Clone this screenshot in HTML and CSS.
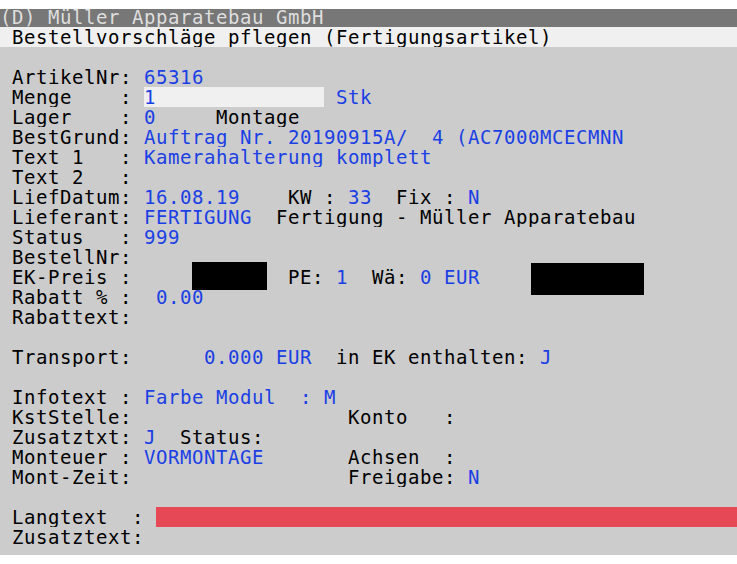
FILE: index.html
```html
<!DOCTYPE html>
<html lang="de">
<head>
    <meta charset="UTF-8">
    <meta name="viewport" content="width=device-width, initial-scale=1.0">
    <title>Bestellvorschläge pflegen</title>
    <link rel="stylesheet" href="styles.css">
</head>
<body>

<div class="screen">
    <div class="row title">(D) Müller Apparatebau GmbH</div>
    <div class="row subtitle"> Bestellvorschläge pflegen (Fertigungsartikel)</div>

    <div class="body">
        <div class="row"> </div>
        <div class="row"> ArtikelNr: <span class="val">65316</span></div>
        <div class="row"> Menge    : <span class="input val">1              </span> <span class="val">Stk</span></div>
        <div class="row"> Lager    : <span class="val">0</span>     Montage</div>
        <div class="row"> BestGrund: <span class="val">Auftrag Nr. 20190915A/  4 (AC7000MCECMNN</span></div>
        <div class="row"> Text 1   : <span class="val">Kamerahalterung komplett</span></div>
        <div class="row"> Text 2   :</div>
        <div class="row"> LiefDatum: <span class="val">16.08.19</span>    KW : <span class="val">33</span>  Fix : <span class="val">N</span></div>
        <div class="row"> Lieferant: <span class="val">FERTIGUNG</span>  Fertigung - Müller Apparatebau</div>
        <div class="row"> Status   : <span class="val">999</span></div>
        <div class="row"> BestellNr:</div>
        <div class="row"> EK-Preis :             PE: <span class="val">1</span>  Wä: <span class="val">0 EUR</span></div>
        <div class="row"> Rabatt % :  <span class="val">0.00</span></div>
        <div class="row"> Rabattext:</div>
        <div class="row"> </div>
        <div class="row"> Transport:      <span class="val">0.000 EUR</span>  in EK enthalten: <span class="val">J</span></div>
        <div class="row"> </div>
        <div class="row"> Infotext : <span class="val">Farbe Modul  : M</span></div>
        <div class="row"> KstStelle:                  Konto   :</div>
        <div class="row"> Zusatztxt: <span class="val">J</span>  Status:</div>
        <div class="row"> Monteuer : <span class="val">VORMONTAGE</span>       Achsen  :</div>
        <div class="row"> Mont-Zeit:                  Freigabe: <span class="val">N</span></div>
        <div class="row"> </div>
        <div class="row field-row"><span> Langtext  : </span><span class="bar"></span></div>
        <div class="row"> Zusatztext:</div>
    </div>

    <!-- geschwärzte Preise -->
    <div class="redact redact-ek"></div>
    <div class="redact redact-vk"></div>
</div>

</body>
</html>
```

FILE: styles.css
```css
body {
    margin: 0;
    background-color: #ffffff;
}
.screen {
    position: relative;
    margin-top: 9px;
    font-family: "DejaVu Sans Mono", "Liberation Mono", monospace;
    font-size: 19px;
    letter-spacing: 0.56px;
    color: #000;
}
.row {
    height: 20px;
    line-height: 20px;
    white-space: pre;
    overflow: hidden;
}
.title {
    height: 18px;
    line-height: 17px;
    overflow: visible;
    background-color: #777777;
    color: #dedede;
}
.subtitle {
    background-color: #f0f0f0;
}
.body {
    background-color: #cccccc;
    padding-bottom: 8px;
}
.val {
    color: #1a40e4;
}
.input {
    background-color: #f0f0f0;
}
.field-row {
    display: flex;
}
.bar {
    flex: 1;
    background-color: #e64855;
}
.redact {
    position: absolute;
    background-color: #000;
}
.redact-ek {
    left: 192px;
    top: 253px;
    width: 75px;
    height: 28px;
}
.redact-vk {
    left: 531px;
    top: 254px;
    width: 113px;
    height: 32px;
}
```
